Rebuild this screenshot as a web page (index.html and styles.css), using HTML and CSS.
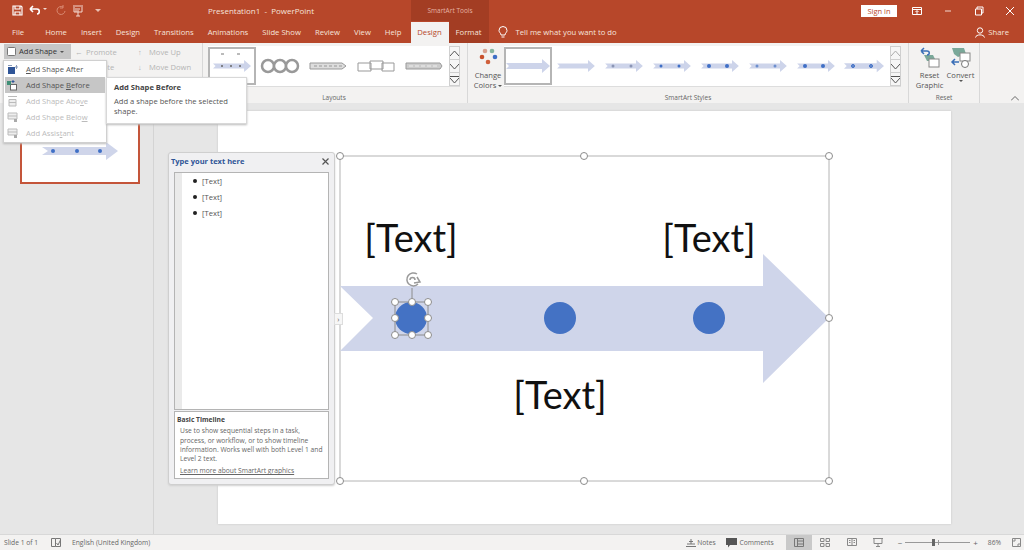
FILE: index.html
```html
<!DOCTYPE html>
<html lang="en">

<head>
  <meta charset="UTF-8" />
  <meta name="viewport" content="width=device-width, initial-scale=1.0" />
  <title>Presentation1 - PowerPoint</title>
  <link rel="stylesheet" href="styles.css">
</head>

<body>
  <svg class="defs" width="0" height="0">
    <symbol id="mini" viewBox="0 0 44 14">
      <path d="M0 4H36V0L44 7L36 14V10H0L3 7Z" fill="#cdd4ea" />
    </symbol>
  </svg>

  <div class="titlebar">
    <div class="qat">
      <svg width="11" height="11" viewBox="0 0 11 11"><path d="M1 1H9L10 2V10H1ZM3 1V4H8V1M3 10V7H8V10" fill="none" stroke="#fff" stroke-width="1.2" /></svg>
      <svg width="13" height="11" viewBox="0 0 13 11"><path d="M1 4H8C11 4 11 9 8 9M1 4L4 1M1 4L4 7" fill="none" stroke="#fff" stroke-width="1.6" /></svg>
      <span class="qat-caret"></span>
      <svg width="10" height="11" viewBox="0 0 10 11"><path d="M7 2A4 4 0 1 0 9 6M7 0V3H4" fill="none" stroke="#d98a72" stroke-width="1" /></svg>
      <svg width="12" height="12" viewBox="0 0 12 12"><path d="M1 1H11M2 2V7H10V2M6 7V11M4 11H8M3 4H8M3 6H7" fill="none" stroke="#f3d9d0" stroke-width="1" /></svg>
      <span class="qat-more"></span>
    </div>
    <div class="doc-title">Presentation1 &nbsp;-&nbsp; PowerPoint</div>
    <div class="context-title">SmartArt Tools</div>
    <button class="signin">Sign in</button>
    <div class="win-btns">
      <svg width="10" height="10" viewBox="0 0 10 10"><path d="M.5 1.500H9.500V8.500H.5ZM.5 3.500H9.500M5 8V5M3.500 6L5 4.500L6.500 6" fill="none" stroke="#fff" /></svg>
      <svg width="10" height="10" viewBox="0 0 10 10"><path d="M2 5H8" stroke="#f3d9d0" /></svg>
      <svg width="10" height="10" viewBox="0 0 10 10"><path d="M1.500 3H7.500V9H1.500ZM3 3V1H9V7H7.500" fill="none" stroke="#fff" /></svg>
      <svg width="10" height="10" viewBox="0 0 10 10"><path d="M1 1L9 9M9 1L1 9" stroke="#fff" /></svg>
    </div>
  </div>

  <div class="tabs">
    <span class="tab file">File</span>
    <span class="tab">Home</span>
    <span class="tab">Insert</span>
    <span class="tab">Design</span>
    <span class="tab">Transitions</span>
    <span class="tab">Animations</span>
    <span class="tab">Slide Show</span>
    <span class="tab">Review</span>
    <span class="tab">View</span>
    <span class="tab">Help</span>
    <span class="tab active">Design</span>
    <span class="tab format">Format</span>
    <svg class="bulb" width="10" height="13" viewBox="0 0 10 13"><path d="M3 9C3 7 1 6.500 1 4.500A4 4 0 0 1 9 4.500C9 6.500 7 7 7 9ZM3.500 11H6.500" fill="none" stroke="#fff" /></svg>
    <span class="tell">Tell me what you want to do</span>
    <span class="share">
      <svg width="10" height="11" viewBox="0 0 10 11"><circle cx="5" cy="3.500" r="2.700" fill="none" stroke="#fff" /><path d="M.5 10.500C1 7 9 7 9.500 10.500" fill="none" stroke="#fff" /></svg>
      Share
    </span>
  </div>

  <div class="ribbon">
    <div class="group create">
      <div class="create-col first">
        <span class="add-shape">
          <svg width="9" height="9" viewBox="0 0 9 9"><rect x=".5" y=".5" width="8" height="8" rx="1" fill="#fff" stroke="#777" /></svg>
          Add Shape <i class="caret"></i>
        </span>
      </div>
      <div class="create-col second">
        <span class="off"><i class="arr">&#8592;</i>Promote</span>
        <span class="off"><i class="arr">&#8594;</i>Demote</span>
      </div>
      <div class="create-col third">
        <span class="off"><i class="arr">&#8593;</i>Move Up</span>
        <span class="off"><i class="arr">&#8595;</i>Move Down</span>
      </div>
    </div>

    <div class="group layouts">
      <div class="gallery layout-gallery">
        <div class="thumb selected"><svg width="38" height="26" viewBox="0 0 38 26"><svg y="6" width="38" height="14"><use href="#mini" /></svg><g fill="#666"><circle cx="9" cy="13" r="1" /><circle cx="18" cy="13" r="1" /><circle cx="27" cy="13" r="1" /></g><path d="M8 1H11M24 1H27M16 25H19" stroke="#777" /></svg></div>
        <div class="thumb">
          <svg width="40" height="16" viewBox="0 0 40 16" fill="#fff" stroke="#999" stroke-width="2.500"><circle cx="8" cy="8" r="6" /><circle cx="20" cy="8" r="6" /><circle cx="32" cy="8" r="6" /></svg>
        </div>
        <div class="thumb"><svg width="38" height="8" viewBox="0 0 38 8"><path d="M1 1H33L37 4L33 7H1Z" fill="#ddd" stroke="#999" /><path d="M5 4H33" stroke="#999" stroke-dasharray="3 2" /></svg></div>
        <div class="thumb"><svg width="38" height="12" viewBox="0 0 38 12" fill="#fff" stroke="#999"><path d="M1 3H14V11H1ZM13 1H26V9H13ZM25 3H37V11H25Z" /></svg></div>
        <div class="thumb"><svg width="38" height="8" viewBox="0 0 38 8"><path d="M1 1H35L37 4L35 7H1Z" fill="#ccc" stroke="#999" /><path d="M4 4H34" stroke="#eee" stroke-dasharray="4 2" /></svg></div>
        <div class="spin">
          <span><svg width="9" height="5" viewBox="0 0 9 5"><path d="M0 5L4.500 0L9 5" fill="none" stroke="#555" /></svg></span>
          <span><svg width="9" height="5" viewBox="0 0 9 5"><path d="M0 0L4.500 5L9 0" fill="none" stroke="#555" /></svg></span>
          <span><svg width="9" height="7" viewBox="0 0 9 7"><path d="M0 .5H9M0 2L4.500 7L9 2" fill="none" stroke="#555" /></svg></span>
        </div>
      </div>
      <div class="group-label">Layouts</div>
    </div>

    <div class="group styles">
      <div class="styles-row">
        <div class="change-colors">
          <svg width="20" height="20" viewBox="0 0 20 20"><circle cx="7" cy="4" r="2.300" fill="#d8a08e" /><circle cx="14" cy="4" r="2.300" fill="#86b59f" /><circle cx="4" cy="10" r="2.300" fill="#c8502c" /><circle cx="17" cy="10" r="2.300" fill="#3f6fc6" /><circle cx="10" cy="15" r="2.300" fill="#d0603c" /></svg>
          <span>Change</span>
          <span>Colors <i class="caret"></i></span>
        </div>
        <div class="gallery style-gallery">
          <div class="thumb selected"><svg width="44" height="14"><use href="#mini" /></svg></div>
          <div class="thumb"><svg width="38" height="12"><use href="#mini" /></svg></div>
          <div class="thumb"><svg width="38" height="12"><use href="#mini" /><g fill="#8b95b5"><circle cx="8" cy="6" r="1.500" /><circle cx="26" cy="6" r="1.500" /></g></svg></div>
          <div class="thumb"><svg width="38" height="12"><use href="#mini" /><g fill="#3f6fc6"><circle cx="8" cy="6" r="1.500" /><circle cx="26" cy="6" r="1.500" /></g></svg></div>
          <div class="thumb"><svg width="38" height="12"><use href="#mini" /><g fill="#3f6fc6"><circle cx="8" cy="6" r="2" /><circle cx="26" cy="6" r="2" /></g></svg></div>
          <div class="thumb"><svg width="38" height="12"><use href="#mini" /><g fill="#6d8fce"><circle cx="8" cy="6" r="1.500" /><circle cx="26" cy="6" r="1.500" /></g></svg></div>
          <div class="thumb"><svg width="38" height="12"><use href="#mini" /><g fill="#3f6fc6"><circle cx="8" cy="6" r="2" /><circle cx="26" cy="6" r="2" /></g></svg></div>
          <div class="thumb"><svg width="40" height="14"><use href="#mini" /><g fill="#6d8fce" stroke="#3f6fc6"><circle cx="9" cy="7" r="1.500" /><circle cx="27" cy="7" r="1.500" /></g></svg></div>
          <div class="spin">
            <span><svg width="9" height="5" viewBox="0 0 9 5"><path d="M0 5L4.500 0L9 5" fill="none" stroke="#aaa" /></svg></span>
            <span><svg width="9" height="5" viewBox="0 0 9 5"><path d="M0 0L4.500 5L9 0" fill="none" stroke="#555" /></svg></span>
            <span><svg width="9" height="7" viewBox="0 0 9 7"><path d="M0 .5H9M0 2L4.500 7L9 2" fill="none" stroke="#555" /></svg></span>
          </div>
        </div>
      </div>
      <div class="group-label">SmartArt Styles</div>
    </div>

    <div class="group reset">
      <div class="reset-row">
        <div class="big-btn">
          <svg width="22" height="22" viewBox="0 0 22 22"><path d="M5 8H14L17 14H8Z" fill="#7aa899" /><rect x="10" y="12" width="10" height="8" fill="#fff" stroke="#888" /><path d="M2 4L5 1M2 4L5 7M2 4H8C11 4 11 8 8 8" fill="none" stroke="#3a6fb7" stroke-width="1.500" /></svg>
          <span>Reset</span><span>Graphic</span>
        </div>
        <div class="big-btn">
          <svg width="22" height="22" viewBox="0 0 22 22"><path d="M2 1H14L16 7L8 10L4 7Z" fill="#7aa899" /><rect x="10" y="6" width="10" height="8" fill="#fff" stroke="#888" /><circle cx="15" cy="17" r="3.500" fill="#fff" stroke="#777" /><path d="M9 15H2M5 12L2 15L5 18" fill="none" stroke="#3a6fb7" stroke-width="1.500" /></svg>
          <span>Convert</span><i class="caret"></i>
        </div>
      </div>
      <div class="group-label">Reset</div>
    </div>
    <svg class="collapse" width="8" height="5" viewBox="0 0 8 5"><path d="M0 4.500L4 .5L8 4.500" fill="none" stroke="#666" /></svg>
  </div>

  <div class="workspace">
    <div class="thumbs">
      <div class="slide-thumb">
        <svg width="76" height="18" viewBox="0 0 76 18">
          <path d="M0 5H64V0L76 9L64 18V13H0L6 9Z" fill="#cfd5ea" />
          <g fill="#3f6fc6"><circle cx="11" cy="9" r="2" /><circle cx="35" cy="9" r="2" /><circle cx="58" cy="9" r="2" /></g>
        </svg>
      </div>
    </div>
    <div class="canvas">
      <div class="slide">
        <svg class="art" width="510" height="345" viewBox="0 0 510 345">
          <rect x="10" y="10" width="489" height="325" fill="none" stroke="#b4b4b4" />
          <path d="M10 140H433V108L499 172L433 237V205H10L43 172Z" fill="#cfd5ea" />
          <g fill="#4472c4">
            <circle cx="81" cy="172" r="16" />
            <circle cx="230" cy="172" r="16" />
            <circle cx="379" cy="172" r="16" />
          </g>
          <g class="art-text">
            <text x="81" y="106">[Text]</text>
            <text x="379" y="106">[Text]</text>
            <text x="230" y="263">[Text]</text>
          </g>
          <g class="sel">
            <rect x="65" y="156" width="33" height="33" fill="none" />
            <path d="M82 156V142" fill="none" />
            <circle cx="65" cy="156" r="3.500" /><circle cx="82" cy="156" r="3.500" /><circle cx="98" cy="156" r="3.500" />
            <circle cx="65" cy="172" r="3.500" /><circle cx="98" cy="172" r="3.500" />
            <circle cx="65" cy="189" r="3.500" /><circle cx="82" cy="189" r="3.500" /><circle cx="98" cy="189" r="3.500" />
          </g>
          <path class="rot" d="M87 128A6.500 6.500 0 1 0 88 138M80 134A2.500 2.500 0 1 1 85 134M84 137L90 136L87 131" fill="none" />
          <g class="handles">
            <circle cx="10" cy="10" r="3.500" /><circle cx="254" cy="10" r="3.500" /><circle cx="499" cy="10" r="3.500" />
            <circle cx="499" cy="172" r="3.500" />
            <circle cx="10" cy="335" r="3.500" /><circle cx="254" cy="335" r="3.500" /><circle cx="499" cy="335" r="3.500" />
          </g>
        </svg>
      </div>
    </div>

    <div class="text-pane">
      <div class="pane-head">
        <b>Type your text here</b>
        <svg width="7" height="7" viewBox="0 0 7 7"><path d="M.5 .5L6.500 6.500M6.500 .5L.5 6.500" stroke="#555" stroke-width="1.200" /></svg>
      </div>
      <div class="pane-list">
        <ul>
          <li>[Text]</li>
          <li>[Text]</li>
          <li>[Text]</li>
        </ul>
      </div>
      <div class="pane-info">
        <h4>Basic Timeline</h4>
        <p>Use to show sequential steps in a task, process, or workflow, or to show timeline information. Works well with both Level 1 and Level 2 text.</p>
        <a>Learn more about SmartArt graphics</a>
      </div>
      <span class="pane-tab">&#8250;</span>
    </div>
  </div>

  <div class="statusbar">
    <span>Slide 1 of 1</span>
    <svg class="spell" width="10" height="9" viewBox="0 0 10 9"><path d="M.5 .5H4.500V8.500H.5ZM4.500 .5H9.500V8.500H4.500M5.500 5L7 7L9.500 2" fill="none" stroke="#777" /></svg>
    <span>English (United Kingdom)</span>
    <span class="status-right">
      <svg width="10" height="8" viewBox="0 0 10 8"><path d="M0 7.500H10M1 5H9M3 2.500H7M5 0V5" stroke="#777" fill="none" /></svg>
      <span>Notes</span>
      <svg class="cmt" width="11" height="10" viewBox="0 0 11 10"><path d="M0 0H11V7H4L2 9.500V7H0Z" fill="#555" /></svg>
      <span>Comments</span>
      <span class="views">
        <span class="view active"><svg width="10" height="9" viewBox="0 0 10 9"><path d="M.5 .5H9.500V8.500H.5ZM3.500 .5V8.500M3.500 3H9.500M3.500 6H9.500" fill="none" stroke="#777" /></svg></span>
        <span class="view"><svg width="10" height="9" viewBox="0 0 10 9"><path d="M.5 .5H4V3.500H.5ZM6 .5H9.500V3.500H6ZM.5 5.500H4V8.500H.5ZM6 5.500H9.500V8.500H6Z" fill="none" stroke="#888" /></svg></span>
        <span class="view"><svg width="10" height="9" viewBox="0 0 10 9"><path d="M.5 .5H9.500V7.500H.5ZM5 .5V7.500M2 2.500H3.500M6.500 2.500H8M2 4.500H3.500M6.500 4.500H8" fill="none" stroke="#888" /></svg></span>
        <span class="view"><svg width="10" height="9" viewBox="0 0 10 9"><path d="M0 .5H10M1 .5V5.500H9V.5M5 5.500V9M3 8.500H7" fill="none" stroke="#888" /></svg></span>
      </span>
      <span class="zoom">
        <i class="zoom-sign">&#8722;</i>
        <span class="zoom-track"><i class="zoom-mark"></i><i class="zoom-thumb"></i></span>
        <i class="zoom-sign">+</i>
      </span>
      <span class="zoom-pct">86%</span>
      <svg class="fit" width="9" height="9" viewBox="0 0 9 9"><path d="M.5 .5H8.500V8.500H.5ZM2 4V2H4M5 7H7V5" fill="none" stroke="#888" /></svg>
    </span>
  </div>

  <!-- dropdown + tooltip sit over the ribbon -->
  <div class="menu">
    <div class="menu-item"><svg width="11" height="11" viewBox="0 0 11 11"><rect x="1" y="3" width="7" height="7" fill="#2f5597" /><path d="M1 1.500H5M9.500 1V5M8 3H11" stroke="#8a9bb8" /></svg><span><u>A</u>dd Shape After</span></div>
    <div class="menu-item hover"><svg width="11" height="11" viewBox="0 0 11 11"><rect x="3.500" y="4.500" width="6" height="5.500" fill="#fff" stroke="#666" /><rect x="0" y="1" width="4" height="4" fill="#3f8f76" /><path d="M6 0V3M4.500 1.500H7.500" stroke="#2f5597" /></svg><span>Add Shape <u>B</u>efore</span></div>
    <div class="menu-item off"><svg width="11" height="11" viewBox="0 0 11 11"><path d="M1 .5H10M2 3.500H9V10H2ZM2 6.500H9" fill="#eee" stroke="#bbb" /></svg><span>Add Shape Abo<u>v</u>e</span></div>
    <div class="menu-item off"><svg width="11" height="11" viewBox="0 0 11 11"><path d="M1 1H10V7H1ZM1 4H10" fill="#eee" stroke="#bbb" /><path d="M7 7H10V10H7Z" fill="#aaa" /></svg><span>Add Shape Belo<u>w</u></span></div>
    <div class="menu-item off"><svg width="11" height="11" viewBox="0 0 11 11"><path d="M1 1H10V7H1ZM1 4H10" fill="#eee" stroke="#bbb" /><path d="M7 7H10V10H7Z" fill="#aaa" /></svg><span>Add Assis<u>t</u>ant</span></div>
  </div>
  <div class="tooltip">
    <b>Add Shape Before</b>
    <p>Add a shape before the selected shape.</p>
  </div>
</body>

</html>
```

FILE: styles.css
```css
* {
  margin: 0;
  padding: 0;
  box-sizing: border-box;
}

body {
  width: 1024px;
  height: 550px;
  overflow: hidden;
  position: relative;
  display: flex;
  flex-direction: column;
  font-family: "Open Sans", "Liberation Sans", sans-serif;
  font-size: 7.6px;
  color: #444;
  background-color: #e6e6e6;
}

.defs {
  position: absolute;
}

.caret {
  display: inline-block;
  border: 2px solid transparent;
  border-top: 2.5px solid #555;
  border-bottom: 0;
  vertical-align: middle;
}

/* title bar */
.titlebar {
  height: 21px;
  flex: none;
  display: flex;
  align-items: center;
  background-color: #b7472a;
  color: #f6e3dc;
  padding-left: 12px;
}

.qat {
  width: 196px;
  display: flex;
  align-items: center;
  gap: 6px;
}

.qat-caret {
  border: 2px solid transparent;
  border-top: 2px solid #f3d9d0;
  border-bottom: 0;
  margin: 0 3px 3px -5px;
}

.qat-more {
  border: 3px solid transparent;
  border-top: 3px solid #e9bfb2;
  border-bottom: 0;
  margin-left: 5px;
}

.doc-title {
  width: 203px;
  font-size: 8px;
}

.context-title {
  width: 78px;
  height: 21px;
  line-height: 21px;
  text-align: center;
  font-size: 6.5px;
  color: #e5b3a3;
  background-color: #a33d23;
  margin-right: 372px;
  flex: none;
}

.signin {
  width: 36px;
  height: 12px;
  border: 0;
  background-color: #fff;
  color: #b7472a;
  font: 7.5px "Open Sans", sans-serif;
  flex: none;
}

.win-btns {
  display: flex;
  margin-left: 15px;
  gap: 21px;
}

/* tabs */
.tabs {
  height: 22px;
  flex: none;
  display: flex;
  align-items: center;
  gap: 14px;
  padding-left: 12px;
  background-color: #b7472a;
  color: #f6e3dc;
  font-size: 7.7px;
}

.tab.file {
  margin-right: 7px;
}

.tab.active {
  align-self: flex-end;
  width: 38px;
  height: 21px;
  line-height: 21px;
  text-align: center;
  background-color: #f3f2f1;
  color: #b7472a;
  margin: 0 -14px 0 -5px;
}

.tab.format {
  align-self: stretch;
  width: 40px;
  line-height: 22px;
  text-align: center;
  background-color: #a33d23;
}

.bulb {
  margin-left: -5px;
  margin-right: -6px;
}

.share {
  margin-left: auto;
  margin-right: 15px;
  display: flex;
  align-items: center;
  gap: 3px;
}

/* ribbon */
.ribbon {
  height: 60px;
  flex: none;
  display: flex;
  position: relative;
  background-color: #f3f2f1;
  color: #555;
}

.group {
  display: flex;
  flex-direction: column;
  border-right: 1px solid #d8d8d8;
  position: relative;
}

.group-label {
  margin-top: auto;
  text-align: center;
  font-size: 6.5px;
  color: #666;
  line-height: 10px;
}

.create {
  width: 203px;
  flex-direction: row;
  padding-left: 4px;
}

.create-col {
  display: flex;
  flex-direction: column;
  padding-top: 2px;
}

.create-col span {
  height: 15px;
  line-height: 15px;
  white-space: nowrap;
}

.arr {
  display: inline-block;
  width: 11px;
  font-style: normal;
}

.first {
  width: 71px;
  padding-top: 1px;
}

.second {
  width: 63px;
}

.off {
  color: #b4b4b4;
}

.add-shape {
  display: flex;
  align-items: center;
  gap: 3px;
  width: 67px;
  height: 16px;
  padding-left: 3px;
  background-color: #c6c6c6;
  color: #333;
}

.layouts {
  width: 265px;
  padding: 3px 7px 0 5px;
}

.gallery {
  display: flex;
  align-items: center;
  background-color: #fff;
  height: 41px;
  border-bottom: 1px solid #ddd;
}

.thumb {
  width: 48px;
  height: 38px;
  flex: none;
  display: flex;
  align-items: center;
  justify-content: center;
}

.thumb.selected {
  border: 2px solid #b5b5b5;
}

.spin {
  width: 11px;
  height: 40px;
  margin-left: auto;
  flex: none;
  display: flex;
  flex-direction: column;
  border: 1px solid #cfcfcf;
  background-color: #f6f6f6;
}

.spin span {
  flex: 1;
  display: flex;
  align-items: center;
  justify-content: center;
  border-bottom: 1px solid #cfcfcf;
}

.spin span:last-child {
  border-bottom: 0;
}

.styles {
  width: 441px;
}

.styles-row {
  display: flex;
  padding-top: 3px;
}

.change-colors {
  width: 36px;
  display: flex;
  flex-direction: column;
  align-items: center;
  font-size: 7.6px;
  line-height: 10px;
  flex: none;
  padding: 1px 0 0 4px;
}

.change-colors svg {
  margin-bottom: 3px;
}

.style-gallery {
  width: 397px;
}

.reset {
  width: 71px;
}

.reset-row {
  display: flex;
  justify-content: center;
  gap: 0;
  padding: 4px 0 0 2px;
}

.big-btn {
  width: 31px;
  display: flex;
  flex-direction: column;
  align-items: center;
  font-size: 7.6px;
  line-height: 10px;
}

.big-btn svg {
  margin-bottom: 1px;
}

.collapse {
  position: absolute;
  right: 5px;
  bottom: 2px;
}

/* main area */
.workspace {
  flex: 1;
  display: flex;
  position: relative;
  min-height: 0;
}

.thumbs {
  width: 154px;
  flex: none;
  border-right: 1px solid #d4d4d4;
  padding: 14px 0 0 20px;
}

.slide-thumb {
  width: 120px;
  height: 67px;
  border: 2px solid #c4553a;
  background-color: #fff;
  padding: 23px 0 0 20px;
}

.slide-thumb svg {
  display: block;
}

.canvas {
  flex: 1;
  padding: 8px 73px 10px 64px;
  display: flex;
}

.slide {
  flex: 1;
  position: relative;
  background-color: #fff;
  box-shadow: 0 0 2px #c4c4c4;
}

.art {
  position: absolute;
  left: 112px;
  top: 35px;
}

.art-text {
  font-family: Lato, "Liberation Sans", sans-serif;
  font-size: 38px;
  text-anchor: middle;
  fill: #111;
}

.sel rect,
.sel path {
  stroke: #8c8c8c;
}

.sel circle,
.handles circle {
  fill: #fff;
  stroke: #8c8c8c;
}

.rot {
  stroke: #9a9a9a;
  stroke-width: 1.5;
}

/* text pane */
.text-pane {
  position: absolute;
  left: 168px;
  top: 49px;
  width: 167px;
  height: 333px;
  background-color: #f0f0f2;
  border: 1px solid #cfcfcf;
  border-radius: 3px;
  padding: 0 5px 5px;
  display: flex;
  flex-direction: column;
  box-shadow: 0 1px 2px #d0d0d0;
}

.pane-head {
  height: 19px;
  flex: none;
  display: flex;
  align-items: center;
  justify-content: space-between;
  margin-left: -3px;
  padding-bottom: 3px;
  font-size: 7.5px;
  color: #2f5597;
}

.pane-list {
  flex: 1;
  background-color: #fff;
  border: 1px solid #b4b4b4;
  padding-left: 7px;
  background-image: linear-gradient(#eaeaea, #eaeaea);
  background-size: 7px 100%;
  background-repeat: no-repeat;
}

.pane-list ul {
  padding-left: 20px;
  list-style: none;
}

.pane-list li {
  height: 16px;
  line-height: 16px;
  color: #555;
  position: relative;
}

.pane-list li::before {
  content: "";
  position: absolute;
  left: -9px;
  top: 6px;
  width: 4px;
  height: 4px;
  border-radius: 50%;
  background-color: #222;
}

.pane-info {
  height: 68px;
  flex: none;
  background-color: #fff;
  border: 1px solid #b4b4b4;
  margin-top: 1px;
  padding: 3px 2px 0 2px;
  color: #666;
  font-size: 6.7px;
  line-height: 9.300px;
}

.pane-info h4 {
  font-size: 6.7px;
  color: #444;
  margin-bottom: 2px;
}

.pane-info p {
  padding-left: 3px;
}

.pane-info a {
  display: block;
  margin-top: 3px;
  padding-left: 3px;
  text-decoration: underline;
}

.pane-tab {
  position: absolute;
  right: -9px;
  top: 160px;
  width: 9px;
  height: 12px;
  line-height: 11px;
  text-align: center;
  background-color: #f6f6f6;
  border: 1px solid #ddd;
  color: #666;
}

/* status bar */
.statusbar {
  height: 16px;
  flex: none;
  display: flex;
  align-items: center;
  padding-left: 4px;
  background-color: #f3f2f1;
  border-top: 1px solid #d8d8d8;
  font-size: 6.7px;
  color: #666;
}

.spell {
  margin: 0 11px 0 13px;
}

.status-right {
  margin-left: auto;
  display: flex;
  align-items: center;
  gap: 1px;
  padding-right: 3px;
  height: 100%;
}

.cmt {
  margin: 0 2px 0 9px;
}

.views {
  display: flex;
  height: 100%;
  margin-left: 11px;
}

.view {
  width: 26.500px;
  height: 100%;
  display: flex;
  align-items: center;
  justify-content: center;
}

.view.active {
  background-color: #c9c9c9;
}

.zoom {
  display: flex;
  align-items: center;
  gap: 3px;
  margin-left: 5px;
}

.zoom-sign {
  font-style: normal;
  font-size: 8px;
}

.zoom-track {
  width: 65px;
  height: 1px;
  background-color: #999;
  position: relative;
}

.zoom-mark {
  position: absolute;
  left: 33px;
  top: -2px;
  width: 1px;
  height: 5px;
  background-color: #999;
}

.zoom-thumb {
  position: absolute;
  left: 27px;
  top: -3px;
  width: 3px;
  height: 7px;
  background-color: #666;
}

.zoom-pct {
  margin-left: 9px;
}

.fit {
  margin-left: 10px;
}

/* dropdown */
.menu {
  position: absolute;
  left: 3px;
  top: 60px;
  width: 104px;
  height: 83px;
  background-color: #fff;
  border: 1px solid #d0d0d0;
  padding: 0 1px;
  box-shadow: 0 1px 2px #bbb;
}

.menu-item {
  height: 16px;
  display: flex;
  align-items: center;
  gap: 8px;
  padding-left: 2px;
  color: #555;
}

.menu-item.hover {
  background-color: #c6c6c6;
}

.menu-item.off {
  color: #bbb;
}

.tooltip {
  position: absolute;
  left: 106px;
  top: 77px;
  width: 141px;
  height: 47px;
  background-color: #fff;
  border: 1px solid #d8d8d8;
  padding: 4px 7px;
  box-shadow: 0 1px 2px #bbb;
  color: #555;
  line-height: 10.500px;
}

.tooltip b {
  display: block;
  margin-bottom: 3px;
  color: #444;
}
```
